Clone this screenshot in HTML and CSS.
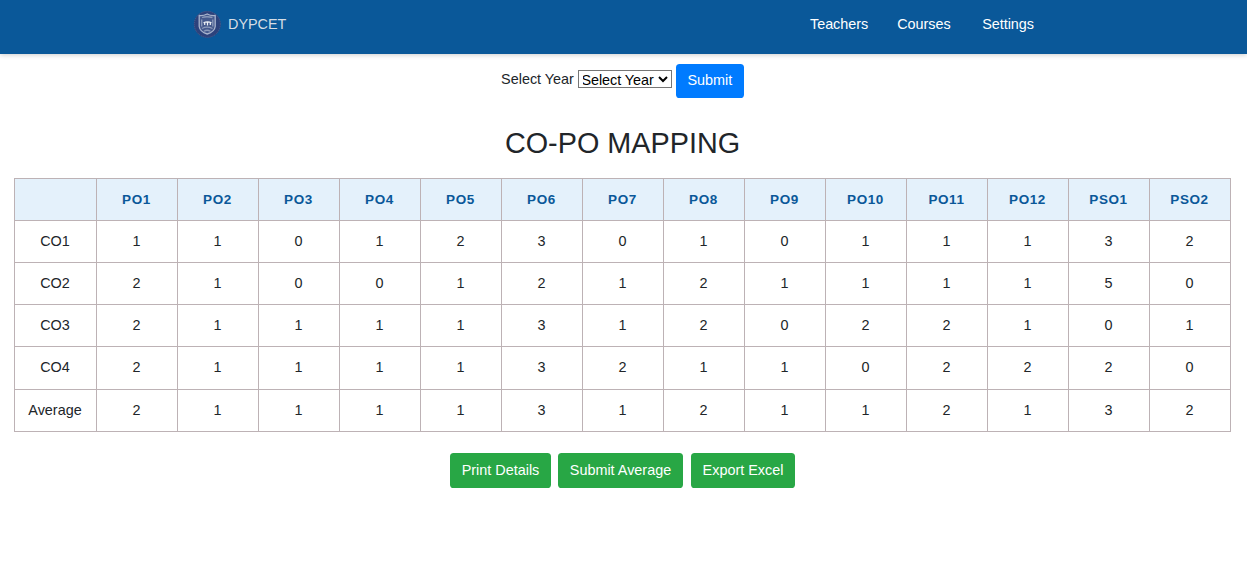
FILE: index.html
```html
<!DOCTYPE html>
<html lang="en">
<head>
<meta charset="utf-8">
<title>CO-PO Mapping</title>
<link rel="stylesheet" href="styles.css">
</head>
<body>
<header class="navbar">
  <a class="brand">
    <svg class="logo" viewBox="0 0 28 28" aria-hidden="true">
      <circle cx="14.3" cy="14.3" r="13.4" fill="#2c427c"/>
      <circle cx="14.3" cy="14.3" r="13" fill="none" stroke="#596b96" stroke-width=".7" stroke-dasharray="1 1"/>
      <path d="M6.2 5.5Q10 6 14.2 4Q18 6 22.2 5.5V16.5Q21.5 22 14.2 24Q7 22 6.2 16.5Z" fill="#45598c" stroke="#a9b5ce" stroke-width="1.3"/>
      <path d="M9 7.5Q14 6 19.5 7.5M8.7 9.5V16.5M19.8 9.5V16.5M9 18.5Q14 15.8 19.5 18.5M11 21.2Q14 19.3 17.5 21.2" fill="none" stroke="#8b9aba" stroke-width="1.3"/>
      <path d="M10.5 12.7Q14.5 11 18.5 12.7M11.7 12.5V15M14.5 12V15.5M17.3 12.5V15" fill="none" stroke="#eef1f6" stroke-width="1.2"/>
    </svg>
    <span>DYPCET</span>
  </a>
  <nav class="links"><a>Teachers</a><a>Courses</a><a class="settings">Settings</a></nav>
</header>
<main>
  <form class="filter">
    <label for="year">Select Year</label>
    <select id="year" class="year"><option>Select Year</option></select>
    <button type="button" class="btn btn-primary">Submit</button>
  </form>
  <h2 class="title">CO-PO MAPPING</h2>
  <table class="mapping">
    <colgroup><col class="first"><col span="14"></colgroup>
    <thead><tr><th></th><th>PO1</th><th>PO2</th><th>PO3</th><th>PO4</th><th>PO5</th><th>PO6</th><th>PO7</th><th>PO8</th><th>PO9</th><th>PO10</th><th>PO11</th><th>PO12</th><th>PSO1</th><th>PSO2</th></tr></thead>
    <tbody>
      <tr><td>CO1</td><td>1</td><td>1</td><td>0</td><td>1</td><td>2</td><td>3</td><td>0</td><td>1</td><td>0</td><td>1</td><td>1</td><td>1</td><td>3</td><td>2</td></tr>
      <tr><td>CO2</td><td>2</td><td>1</td><td>0</td><td>0</td><td>1</td><td>2</td><td>1</td><td>2</td><td>1</td><td>1</td><td>1</td><td>1</td><td>5</td><td>0</td></tr>
      <tr><td>CO3</td><td>2</td><td>1</td><td>1</td><td>1</td><td>1</td><td>3</td><td>1</td><td>2</td><td>0</td><td>2</td><td>2</td><td>1</td><td>0</td><td>1</td></tr>
      <tr class="tall"><td>CO4</td><td>2</td><td>1</td><td>1</td><td>1</td><td>1</td><td>3</td><td>2</td><td>1</td><td>1</td><td>0</td><td>2</td><td>2</td><td>2</td><td>0</td></tr>
      <tr><td>Average</td><td>2</td><td>1</td><td>1</td><td>1</td><td>1</td><td>3</td><td>1</td><td>2</td><td>1</td><td>1</td><td>2</td><td>1</td><td>3</td><td>2</td></tr>
    </tbody>
  </table>
  <div class="actions">
    <button type="button" class="btn btn-success print">Print Details</button>
    <button type="button" class="btn btn-success average">Submit Average</button>
    <button type="button" class="btn btn-success export">Export Excel</button>
  </div>
</main>
</body>
</html>
```
FILE: styles.css
```css
* { box-sizing: border-box; }
body {
  margin: 0;
  background: #fff;
  color: #212529;
  font: 14.4px/21.6px "Liberation Sans", Arial, sans-serif;
}
.navbar {
  display: flex;
  justify-content: space-between;
  height: 54px;
  padding: 10px 213px 0 193px;
  background: #0a5899;
  box-shadow: 0 1px 5px rgba(0, 0, 0, .2);
}
.brand { display: flex; gap: 7px; height: 28px; color: #d6dde4; line-height: 28px; }
.logo { width: 28px; height: 28px; }
.links { display: flex; gap: 29px; height: 28px; color: #fff; line-height: 28px; }
.settings { margin-left: 2.5px; }
.links a { letter-spacing: -.02px; }
.filter {
  display: flex;
  justify-content: center;
  gap: 4px;
  height: 34px;
  margin-top: 10px;
  padding-right: 2px;
}
.filter label { line-height: 30px; }
.year {
  width: 94px;
  height: 18px;
  margin-top: 6px;
  padding: 0 0 2px;
  border: 1px solid #767676;
  border-radius: 0;
  background: #fff;
  color: #000;
  font: 14.4px "Liberation Sans", Arial, sans-serif;
  letter-spacing: -.04px;
  text-indent: -1.5px;
}
.btn {
  height: 35px;
  padding: 0;
  border: 0;
  border-radius: 3.6px;
  color: #fff;
  font: 14.4px/21.6px "Liberation Sans", Arial, sans-serif;
}
.btn-primary { width: 68px; height: 34px; background: #007bff; }
.btn-success { background: #28a745; }
.title {
  height: 35px;
  margin: 28px 0 17px;
  padding-right: 2px;
  font-size: 28.8px;
  font-weight: 400;
  line-height: 35px;
  text-align: center;
}
.mapping {
  width: 1217px;
  margin: 0 0 0 14px;
  border-collapse: collapse;
  table-layout: fixed;
  text-align: center;
}
.mapping .first { width: 82px; }
.mapping tr { height: 42px; }
.mapping .tall { height: 43px; }
.mapping th, .mapping td { padding: 0 1px 0 0; border: 1px solid #bdb2b5; }
.mapping th { background: #e4f1fb; color: #0a5899; font-size: 13.5px; letter-spacing: .6px; }
.actions { display: flex; justify-content: center; margin: 21px 2px 0 0; }
.print { width: 101px; margin-right: 7px; }
.average { width: 125px; margin-right: 8px; }
.export { width: 104px; }
```
